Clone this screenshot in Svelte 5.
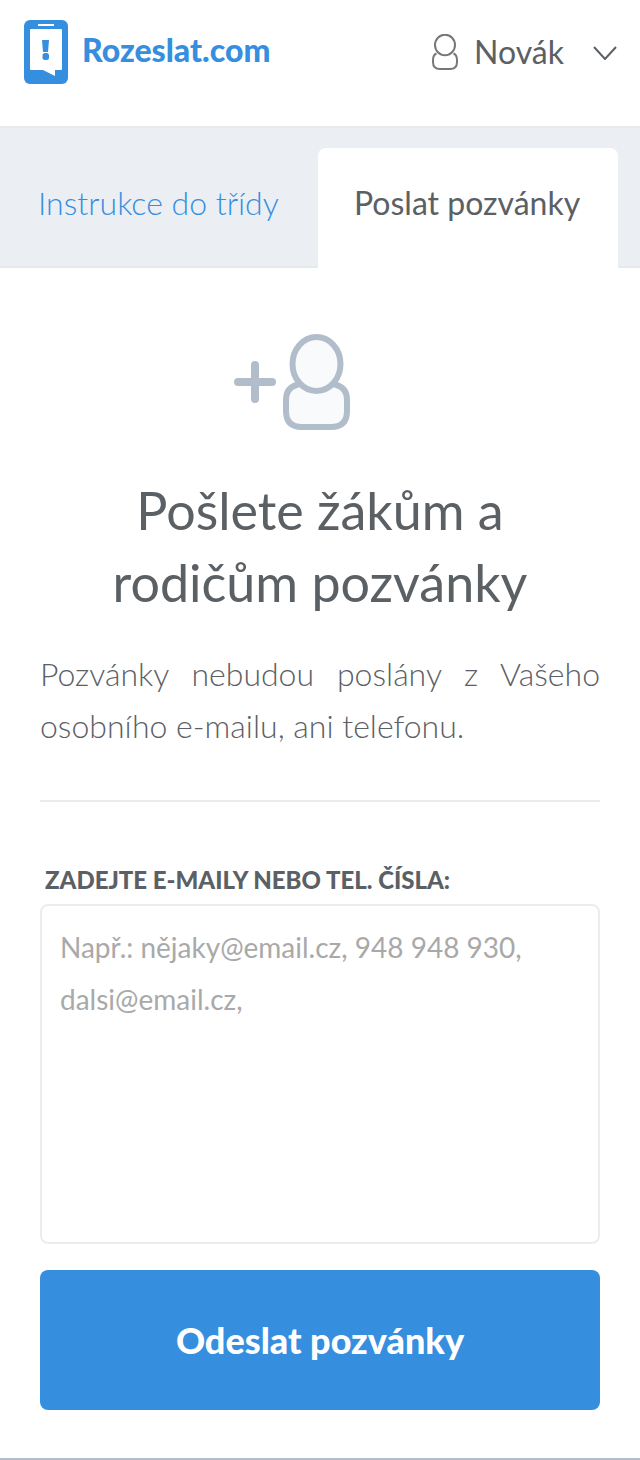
<script>
  let recipients = $state('');
</script>

<header>
  <a class="brand" href="#home">
    <svg width="44" height="64" viewBox="0 0 44 64" aria-hidden="true">
      <rect width="44" height="64" rx="6" fill="#368edf" />
      <rect x="14" y="4" width="16" height="2" fill="#fff" />
      <path d="M7 9h30q1 0 1 1v39q0 1-1 1h-6v6l-12-6H7q-1 0-1-1V10q0-1 1-1z" fill="#fff" />
      <path d="M18 20h7l-1 12h-5z" fill="#368edf" />
      <rect x="18.5" y="33" width="6.5" height="7" rx="2.5" fill="#368edf" />
    </svg>
    <span>Rozeslat.com</span>
  </a>
  <button class="account" type="button">
    <svg width="28" height="36" viewBox="0 0 28 36" fill="none" stroke="#777" stroke-width="2" aria-hidden="true">
      <ellipse cx="13" cy="11" rx="10" ry="10.3" />
      <path d="M4.500 19.500Q1 21 1 26v2q0 7 7 7h10q7 0 7-7v-2q0-5-3.500-6.500" />
    </svg>
    <span>Novák</span>
    <svg class="chevron" width="24" height="16" viewBox="0 0 24 16" fill="none" stroke="#5b6065" stroke-width="2" aria-hidden="true">
      <path d="M1 3l11 12L23 3" />
    </svg>
  </button>
</header>

<nav>
  <a class="tab" href="#instrukce">Instrukce do třídy</a>
  <a class="tab active" href="#pozvanky" aria-current="page">Poslat pozvánky</a>
</nav>

<main>
  <svg class="invite" width="172" height="96" viewBox="0 0 172 96" aria-hidden="true">
    <path d="M4 48h34M21 31v34" stroke="#b1bdca" stroke-width="8" stroke-linecap="round" />
    <g fill="#f9fafc" stroke="#b1bdca" stroke-width="6">
      <path d="M67 50Q52 52 52 66v11q0 16 16 16h29q16 0 16-16V66q0-14-15-16z" />
      <ellipse cx="82.500" cy="30" rx="24" ry="27" />
    </g>
  </svg>
  <h1>Pošlete žákům a rodičům pozvánky</h1>
  <p>Pozvánky nebudou poslány z Vašeho osobního e-mailu, ani telefonu.</p>
  <hr />
  <form onsubmit={(event) => event.preventDefault()}>
    <label for="recipients">Zadejte e-maily nebo tel. čísla:</label>
    <textarea id="recipients" bind:value={recipients} placeholder="Např.: nějaky@email.cz, 948 948 930, dalsi@email.cz,"></textarea>
    <button class="send" type="submit">Odeslat pozvánky</button>
  </form>
</main>

<footer></footer>

<style>
  :global(body) {
    background: #fff;
    color: #5b6065;
    font-family: Lato, "Open Sans", sans-serif;
    font-size: 32px;
  }
  header {
    display: flex;
    justify-content: space-between;
    align-items: flex-start;
    padding: 20px 23px 0 24px;
    height: 128px;
    box-sizing: border-box;
    border-bottom: 2px solid #e6eaed;
  }
  a {
    color: #368edf;
    text-decoration: none;
  }
  .brand {
    display: flex;
    gap: 14px;
    font-weight: 900;
    line-height: 60px;
  }
  .account {
    display: flex;
    align-items: center;
    gap: 14px;
    padding: 0;
    border: 0;
    background: none;
    color: inherit;
    font: inherit;
    line-height: 64px;
  }
  .chevron {
    margin-left: 15px;
  }
  nav {
    display: flex;
    justify-content: space-between;
    height: 140px;
    box-sizing: border-box;
    padding: 20px 22px 0 2px;
    background: #ebeff4;
    box-shadow: inset 0 -2px #e4e9ec;
  }
  .tab {
    padding: 0 36px;
    line-height: 110px;
    font-weight: 300;
    white-space: nowrap;
  }
  .active {
    flex: 0 1 228px;
    border-radius: 8px 8px 0 0;
    background: #fff;
    color: #5b6065;
    font-weight: 400;
  }
  main {
    padding: 66px 40px 48px;
  }
  .invite {
    display: block;
    margin: 0 auto 44px;
  }
  h1 {
    margin: 0 0 30px;
    font-size: 52px;
    line-height: 72px;
    font-weight: 400;
    text-align: center;
    padding: 0 60px;
  }
  p {
    margin: 0 0 48px;
    line-height: 52px;
    font-weight: 300;
    text-align: justify;
  }
  hr {
    margin: 0 0 62px;
    border: 0;
    border-top: 2px solid #e9ecef;
  }
  form {
    display: flex;
    flex-direction: column;
  }
  label {
    padding: 0 5px;
    font-size: 24px;
    line-height: 32px;
    margin-bottom: 8px;
    font-weight: 900;
    text-transform: uppercase;
  }
  textarea {
    height: 340px;
    box-sizing: border-box;
    padding: 15px 18px;
    border: 2px solid #e9edf0;
    border-radius: 8px;
    color: inherit;
    font: inherit;
    font-size: 28px;
    line-height: 52px;
    resize: none;
  }
  textarea::placeholder {
    color: #a9a9a9;
  }
  .send {
    height: 140px;
    margin-top: 26px;
    border: 0;
    border-radius: 8px;
    background: #368edf;
    color: #fff;
    font: inherit;
    font-size: 36px;
    font-weight: 900;
  }
  footer {
    border-top: 2px solid #b1bdca;
  }
</style>
